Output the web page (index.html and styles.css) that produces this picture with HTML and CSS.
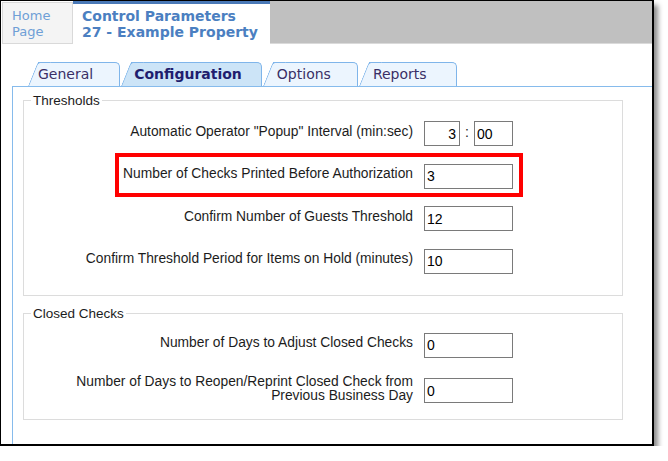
FILE: index.html
```html
<!DOCTYPE html>
<html lang="en">
<head>
  <meta charset="UTF-8">
  <title>Control Parameters - Configuration</title>
  <link rel="stylesheet" href="styles.css">
</head>
<body>
<div class="frame">
  <div class="topbar">
    <div class="home-tab">Home<br>Page</div>
    <div class="page-tab">Control Parameters<br>27 - Example Property</div>
    <div class="topbar-fill"></div>
  </div>

  <div class="tabs">
    <div class="tab"><span>General</span></div>
    <div class="tab active"><span>Configuration</span></div>
    <div class="tab"><span>Options</span></div>
    <div class="tab"><span>Reports</span></div>
  </div>

  <div class="panel">
    <fieldset class="group thresholds">
      <legend>Thresholds</legend>
      <div class="row">
        <label>Automatic Operator "Popup" Interval (min:sec)</label>
        <div class="time">
          <input class="field min" type="text" value="3">
          <span class="colon">:</span>
          <input class="field sec" type="text" value="00">
        </div>
      </div>
      <div class="row marked">
        <label>Number of Checks Printed Before Authorization</label>
        <input class="field" type="text" value="3">
      </div>
      <div class="row">
        <label>Confirm Number of Guests Threshold</label>
        <input class="field" type="text" value="12">
      </div>
      <div class="row">
        <label>Confirm Threshold Period for Items on Hold (minutes)</label>
        <input class="field" type="text" value="10">
      </div>
    </fieldset>

    <fieldset class="group closed">
      <legend>Closed Checks</legend>
      <div class="row">
        <label>Number of Days to Adjust Closed Checks</label>
        <input class="field" type="text" value="0">
      </div>
      <div class="row">
        <label>Number of Days to Reopen/Reprint Closed Check from<br>Previous Business Day</label>
        <input class="field" type="text" value="0">
      </div>
    </fieldset>
  </div>
</div>
</body>
</html>
```

FILE: styles.css
```css
body {
  margin: 0;
  background: #fff;
  font-family: "Liberation Sans", Arial, sans-serif;
}

.frame {
  width: 651px;
  height: 443px;
  border: solid #000;
  border-width: 1px 2px 2px 1px;
  box-shadow: 4px 5px 5px rgba(0, 0, 0, 0.45);
  display: flex;
  flex-direction: column;
  overflow: hidden;
  background: #fff;
}

/* top page bar */
.topbar {
  display: flex;
  height: 43px;
  font-family: "DejaVu Sans", Verdana, sans-serif;
}

.home-tab {
  box-sizing: border-box;
  width: 71px;
  height: 42px;
  margin: 1px 0 0 1px;
  padding: 5px 0 0 9px;
  border: 1px solid #d9d9d9;
  background: #f4f4f4;
  color: #6f9fd6;
  font-size: 13px;
  line-height: 16px;
}

.page-tab {
  box-sizing: border-box;
  width: 197px;
  padding: 4px 0 0 9px;
  border-top: 3px solid #4a79b7;
  background: #fff;
  color: #4b7fc1;
  font-size: 14px;
  font-weight: bold;
  line-height: 16px;
}

.topbar-fill {
  flex: 1;
  background: #c0c0c0;
  border-bottom: 1px solid #dadada;
}

/* tab strip */
.tabs {
  display: flex;
  height: 24px;
  margin-top: 18px;
  padding-left: 27px;
  font-family: "DejaVu Sans", Verdana, sans-serif;
  font-size: 14px;
}

.tab {
  position: relative;
  margin-left: 11px;
  padding: 0 26px 0 4px;
  line-height: 23px;
  border: 1px solid #7fb5ea;
  border-left: none;
  border-bottom: none;
  border-top-right-radius: 5px;
  background: #ecf5fe;
  color: #3a2f66;
}

.tab:first-child {
  margin-left: 10px;
  padding-left: 0;
  padding-right: 26px;
}

.tab:last-child {
  padding-right: 29px;
}

.tab::before {
  content: "";
  position: absolute;
  top: -1px;
  bottom: 0;
  left: -10px;
  width: 12px;
  background: inherit;
  border-top: 1px solid #7fb5ea;
  border-left: 1px solid #7fb5ea;
  border-top-left-radius: 3px;
  transform: skewX(-22deg);
  transform-origin: 0 100%;
}

.tab span {
  position: relative;
}

.tab.active {
  z-index: 1;
  padding: 0 19px 0 3px;
  background: #cce4f7;
  color: #1f1d6e;
  font-weight: bold;
}

/* content panel */
.panel {
  flex: 1;
  margin-left: 11px;
  padding: 6px 0 0 10px;
  border-left: 1px solid #86bbec;
  border-top: 1px solid #86bbec;
}

.group {
  box-sizing: border-box;
  width: 600px;
  margin: 0;
  min-width: 0;
  border: 1px solid #dcdcdc;
  display: flex;
  flex-direction: column;
}

.group legend {
  margin-left: 7px;
  padding: 0 2px;
  font-size: 13.5px;
  line-height: 15px;
  color: #1c1c1c;
}

.thresholds {
  padding: 13px 0 21px 0;
  gap: 17.67px;
}

.closed {
  margin-top: 10px;
  padding: 12px 0 12px 0;
  gap: 17px;
}

.row {
  display: grid;
  grid-template-columns: 389px 89px;
  column-gap: 11px;
  align-items: center;
}

.row label {
  text-align: right;
  font-size: 13.8px;
  line-height: 14px;
  padding-bottom: 4px;
  color: #1c1c1c;
}

.row.marked {
  position: relative;
}

.row.marked::after {
  content: "";
  position: absolute;
  left: 91px;
  top: -11px;
  width: 408px;
  height: 44px;
  box-sizing: border-box;
  border: 4px solid #f00;
}

.field {
  box-sizing: border-box;
  width: 89px;
  height: 25px;
  margin: 0;
  padding: 0 2px;
  border: 1px solid #7a7a7a;
  border-radius: 0;
  background: #fff;
  color: #000;
  font-family: "Liberation Sans", Arial, sans-serif;
  font-size: 14px;
  outline: none;
}

.time {
  display: flex;
  align-items: center;
}

.field.min {
  width: 36px;
  text-align: right;
  padding-right: 3px;
}

.colon {
  width: 14px;
  text-align: center;
  font-size: 14px;
  padding-bottom: 3px;
  color: #1c1c1c;
}

.field.sec {
  width: 39px;
}
```
